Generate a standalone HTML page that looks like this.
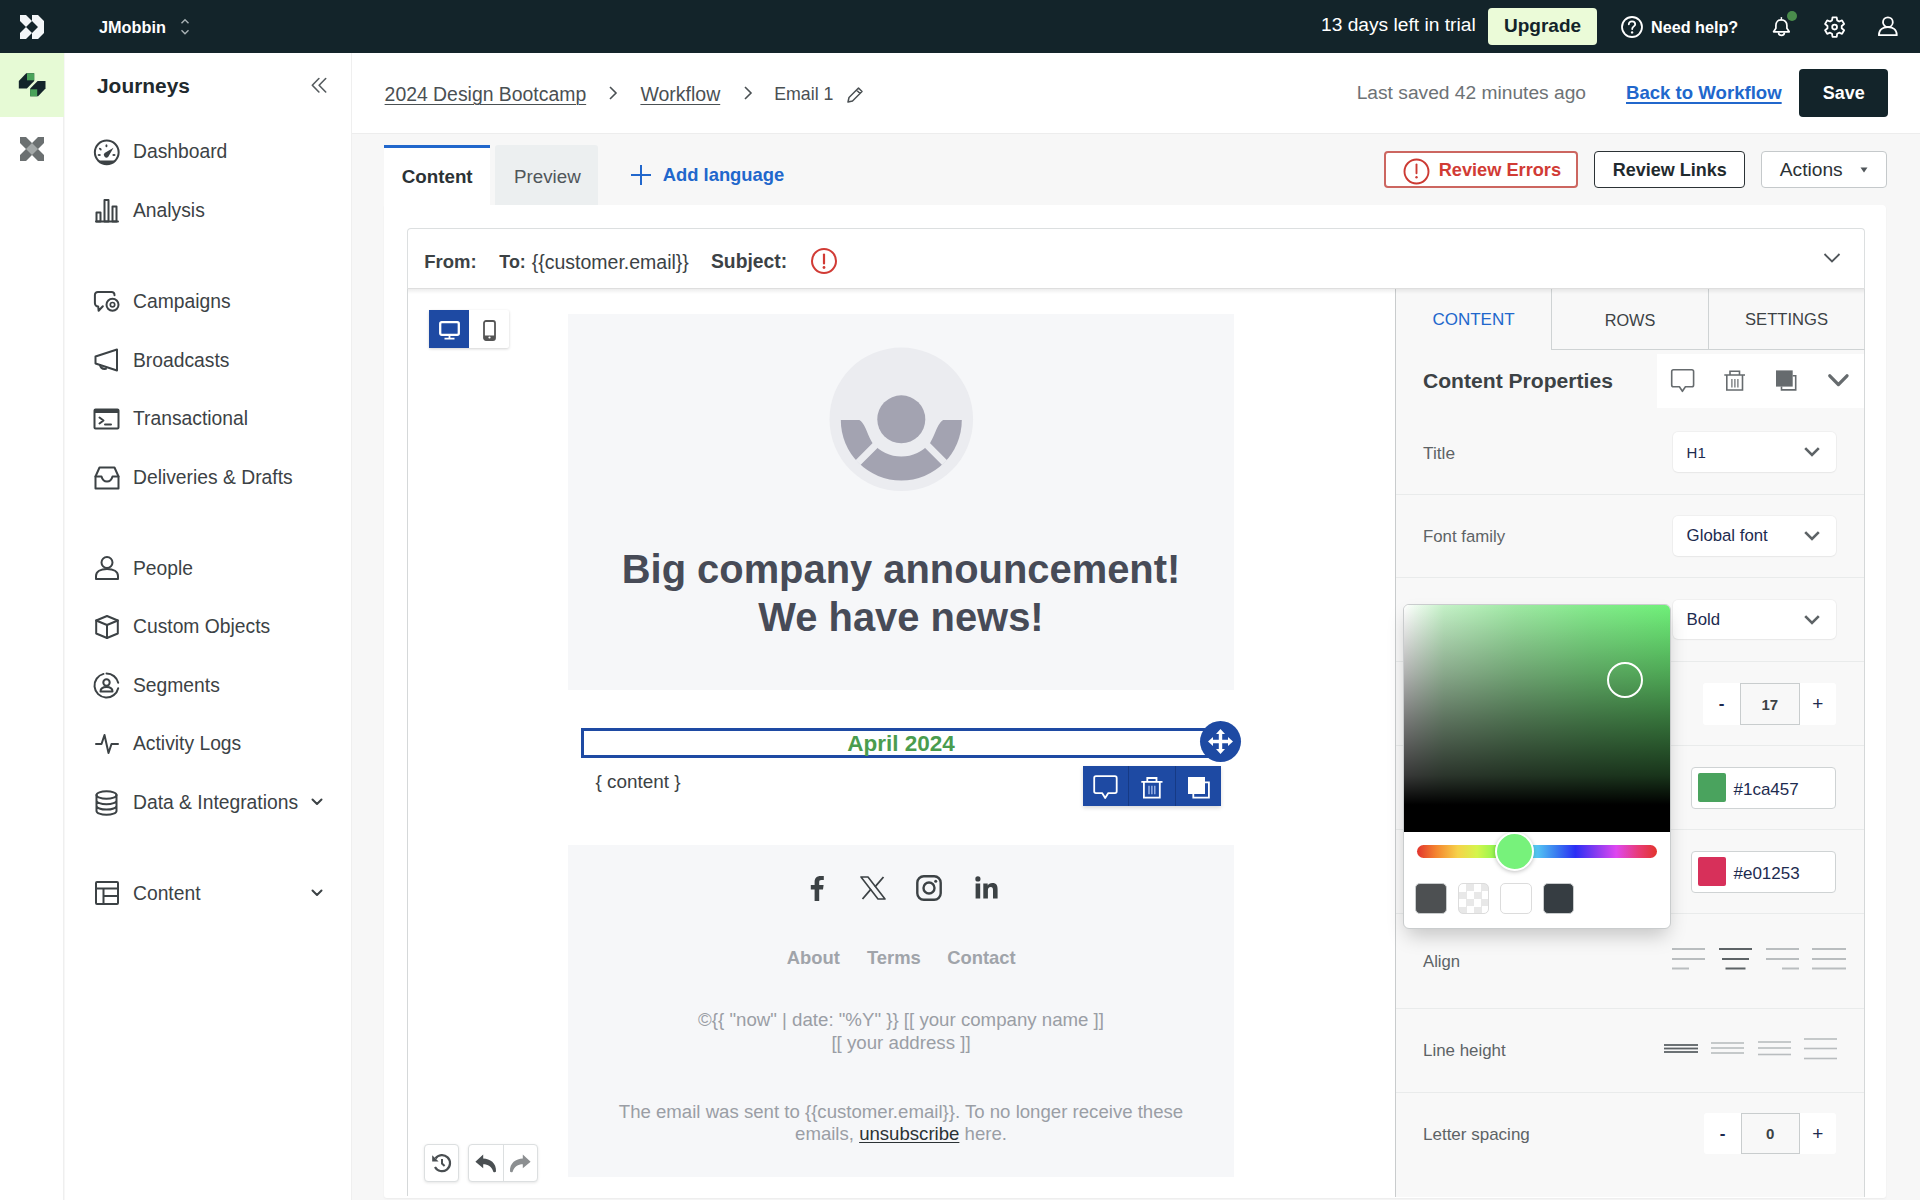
<!DOCTYPE html>
<html><head><meta charset="utf-8">
<style>
*{box-sizing:border-box;margin:0;padding:0}
html,body{width:1920px;height:1200px;overflow:hidden;background:#f7f7f7;font-family:"Liberation Sans",sans-serif;color:#3c4245}
.a{position:absolute}
.t{position:absolute;white-space:nowrap}
svg{position:absolute;overflow:visible}
</style></head><body>
<!-- TOP BAR -->
<div class="a" style="left:0;top:0;width:1920px;height:53px;background:#13242a"></div>
<svg style="left:20px;top:15px" width="24" height="24" viewBox="0 0 24 24"><g fill="#f3f6f8"><path d="M0 0H6L12 6L6 12L0 6Z"/><path d="M0 18L6 12L12 18L6 24H0Z"/><path d="M12 0H18L24 6V18L18 24H12V18L18 12L12 6Z"/></g></svg>
<div class="t" style="left:99px;top:17px;line-height:20px;font-size:16.3px;font-weight:bold;color:#fff">JMobbin</div>
<svg style="left:180px;top:17px" width="10" height="20" viewBox="0 0 10 20"><path d="M1.5 6.2L5 2.7L8.5 6.2M1.5 13.3L5 16.8L8.5 13.3" fill="none" stroke="#a9b2b5" stroke-width="1.4"/></svg>
<div class="t" style="left:1321px;top:14.0px;line-height:22px;font-size:19.2px;color:#fff">13 days left in trial</div>
<div class="a" style="left:1488px;top:8px;width:109px;height:37px;background:#ebfbd8;border-radius:4px"></div>
<div class="t" style="left:1504px;top:15px;line-height:22px;font-size:19px;font-weight:bold;color:#13242a">Upgrade</div>
<svg style="left:1621px;top:16px" width="22" height="22" viewBox="0 0 22 22"><circle cx="11" cy="11" r="10" fill="none" stroke="#fff" stroke-width="1.8"/><path d="M7.8 8.3C7.8 6.4 9.2 5.3 11 5.3C12.8 5.3 14.2 6.5 14.2 8.2C14.2 10.3 11.2 10.6 11.2 13" fill="none" stroke="#fff" stroke-width="1.8" stroke-linecap="round"/><circle cx="11.1" cy="16.4" r="1.2" fill="#fff"/></svg>
<div class="t" style="left:1651px;top:17px;line-height:20px;font-size:16.2px;font-weight:bold;color:#fff">Need help?</div>
<svg style="left:1772px;top:16px" width="20" height="22" viewBox="0 0 20 22"><path d="M1.6 15.8H17.2L14.9 12.2V9.5C14.9 6.1 12.6 3.8 9.4 3.8C6.2 3.8 3.9 6.1 3.9 9.5V12.2Z" fill="none" stroke="#fff" stroke-width="1.7" stroke-linejoin="round"/><path d="M9.4 3.8V1.6" stroke="#fff" stroke-width="1.4" stroke-linecap="round"/><path d="M6.5 16.4A2.95 2.95 0 0 0 12.4 16.4" fill="none" stroke="#fff" stroke-width="1.7"/></svg>
<div class="a" style="left:1787px;top:11.4px;width:10px;height:10px;border-radius:50%;background:#4a8c4c"></div>
<svg style="left:1824px;top:15.7px" width="22" height="23" viewBox="0 0 22 23"><path d="M8.02 4.38 L8.52 1.32 L12.68 1.32 L13.18 4.38 L15.13 5.50 L18.03 4.41 L20.11 8.01 L17.71 9.97 L17.71 12.23 L20.11 14.19 L18.03 17.79 L15.13 16.70 L13.18 17.82 L12.68 20.88 L8.52 20.88 L8.02 17.82 L6.07 16.70 L3.17 17.79 L1.09 14.19 L3.49 12.23 L3.49 9.97 L1.09 8.01 L3.17 4.41 L6.07 5.50Z" fill="none" stroke="#fff" stroke-width="1.8" stroke-linejoin="round"/><circle cx="10.6" cy="11.1" r="2.4" fill="none" stroke="#fff" stroke-width="1.8"/></svg>
<svg style="left:1877px;top:16px" width="22" height="22" viewBox="0 0 22 22"><circle cx="10.9" cy="6.2" r="4.9" fill="none" stroke="#fff" stroke-width="1.8"/><path d="M1.9 19.2H19.8C19.8 13.5 15.5 11 10.9 11C6.3 11 1.9 13.5 1.9 19.2Z" fill="none" stroke="#fff" stroke-width="1.8" stroke-linejoin="round"/></svg>

<!-- LEFT RAIL -->
<div class="a" style="left:0;top:53px;width:64px;height:1147px;background:#fff;border-right:1px solid #efefef"></div>
<div class="a" style="left:0;top:53px;width:64px;height:64px;background:#e6fad5"></div>
<svg style="left:18px;top:73px" width="28" height="24" viewBox="0 0 28 24"><path d="M0.8 8L8.2 0.3H16.2V8L8.9 15.4H0.8Z" fill="#13242a"/><rect x="9" y="0.3" width="7.2" height="7" fill="#4aa35a"/><path d="M12.2 15.4L19.6 8H27.5V15.4L20.1 23.3H12.2Z" fill="#13242a"/><rect x="12.2" y="16.3" width="7" height="7" fill="#4aa35a"/></svg>
<svg style="left:20px;top:137px" width="24" height="24" viewBox="0 0 24 24"><path d="M0 0H6L12 6L18 0H24V6L18 12L24 18V24H18L12 18L6 24H0V18L6 12L0 6Z" fill="#6b7071"/><path d="M12 6L18 12L12 18L6 12Z" fill="#a3a8a8"/></svg>

<!-- SIDEBAR -->
<div class="a" style="left:65px;top:53px;width:287px;height:1147px;background:#fff;border-right:1px solid #efefef"></div>
<div class="t" style="left:97px;top:74px;line-height:24px;font-size:20.9px;font-weight:bold;color:#1f2a2e">Journeys</div>
<svg style="left:309.5px;top:77px" width="18" height="18" viewBox="0 0 18 18"><path d="M8.9 1.55L2.3 8.25L8.9 14.95M15.7 1.55L9.1 8.25L15.7 14.95" fill="none" stroke="#555b5e" stroke-width="1.6" stroke-linecap="round" stroke-linejoin="round"/></svg>
<svg style="left:93px;top:138.5px" width="27" height="27" viewBox="0 0 27 27"><circle cx="13.75" cy="13.35" r="11.9" stroke="#3c4245" stroke-width="2" fill="none" stroke-linejoin="round" stroke-linecap="round"/><path d="M5.18 21.6A11.9 11.9 0 0 0 22.32 21.6Z" fill="#3c4245"/><path d="M20.5 8.7L15.31 17.72A2.6 2.6 0 0 1 11.59 14.08Z" fill="#3c4245"/><ellipse cx="13.45" cy="6.75" rx="1" ry="1.6" fill="#3c4245"/><ellipse cx="7.3" cy="10.05" rx="1.6" ry="1" transform="rotate(45 7.3 10.05)" fill="#3c4245"/><ellipse cx="6.25" cy="16.05" rx="1.6" ry="1" fill="#3c4245"/><ellipse cx="20.95" cy="16.05" rx="1.6" ry="1" fill="#3c4245"/></svg>
<div class="t" style="left:133px;top:140.3px;line-height:24px;font-size:19.3px;color:#3c4245">Dashboard</div>
<svg style="left:95px;top:199px" width="24" height="24" viewBox="0 0 24 24"><path d="M1 22.5H23" stroke="#3c4245" stroke-width="2" fill="none" stroke-linejoin="round" stroke-linecap="round"/><rect x="1.5" y="13.5" width="4" height="9" stroke="#3c4245" stroke-width="2" fill="none" stroke-linejoin="round" stroke-linecap="round"/><rect x="9.5" y="1" width="4" height="21.5" stroke="#3c4245" stroke-width="2" fill="none" stroke-linejoin="round" stroke-linecap="round"/><rect x="17.5" y="7.5" width="4" height="15" stroke="#3c4245" stroke-width="2" fill="none" stroke-linejoin="round" stroke-linecap="round"/></svg>
<div class="t" style="left:133px;top:199.3px;line-height:24px;font-size:19.3px;color:#3c4245">Analysis</div>
<svg style="left:93px;top:290px" width="27" height="23" viewBox="0 0 27 23"><path d="M21.5 5.2V4.9C21.5 3.2 20.3 1.9 18.6 1.9H4.9C3.2 1.9 1.9 3.2 1.9 4.9V13.25C1.9 15 3.3 16.5 5.2 16.5L5.6 20.7L9.85 16.2" stroke="#3c4245" stroke-width="2" fill="none" stroke-linejoin="round" stroke-linecap="round"/><circle cx="19.5" cy="14.7" r="6" stroke="#3c4245" stroke-width="2" fill="none" stroke-linejoin="round" stroke-linecap="round"/><circle cx="19.5" cy="14.7" r="2.2" stroke="#3c4245" stroke-width="1.7" fill="none"/></svg>
<div class="t" style="left:133px;top:289.7px;line-height:24px;font-size:19.3px;color:#3c4245">Campaigns</div>
<svg style="left:94px;top:348px" width="25" height="24" viewBox="0 0 25 24"><path d="M23 1.5V22.5L1.5 15.5V8.5Z" stroke="#3c4245" stroke-width="2" fill="none" stroke-linejoin="round" stroke-linecap="round"/><path d="M6 17C6.5 20 8.8 21.2 12 20.8" stroke="#3c4245" stroke-width="2" fill="none" stroke-linejoin="round" stroke-linecap="round"/></svg>
<div class="t" style="left:133px;top:348.8px;line-height:24px;font-size:19.3px;color:#3c4245">Broadcasts</div>
<svg style="left:93px;top:408px" width="27" height="22" viewBox="0 0 27 22"><rect x="1.5" y="1.5" width="24" height="19" rx="1" stroke="#3c4245" stroke-width="2" fill="none" stroke-linejoin="round" stroke-linecap="round"/><rect x="1.5" y="1.5" width="24" height="3.5" fill="#3c4245"/><path d="M6.5 9.5L10.5 12.5L6.5 15.5M12 16.5H18" stroke="#3c4245" stroke-width="2" fill="none" stroke-linejoin="round" stroke-linecap="round"/></svg>
<div class="t" style="left:133px;top:407.0px;line-height:24px;font-size:19.3px;color:#3c4245">Transactional</div>
<svg style="left:94px;top:466px" width="26" height="24" viewBox="0 0 26 24"><path d="M1.5 10.5L5.5 1.5H20.5L24.5 10.5V22.5H1.5Z" stroke="#3c4245" stroke-width="2" fill="none" stroke-linejoin="round" stroke-linecap="round"/><path d="M1.5 10.5H7.5C8.5 14.5 10 15.5 13 15.5C16 15.5 17.5 14.5 18.5 10.5H24.5" stroke="#3c4245" stroke-width="2" fill="none" stroke-linejoin="round" stroke-linecap="round"/></svg>
<div class="t" style="left:133px;top:465.9px;line-height:24px;font-size:19.3px;color:#3c4245">Deliveries &amp; Drafts</div>
<svg style="left:95px;top:556px" width="24" height="24" viewBox="0 0 24 24"><circle cx="12" cy="6.5" r="5.5" stroke="#3c4245" stroke-width="2" fill="none" stroke-linejoin="round" stroke-linecap="round"/><path d="M1 23H23V20C23 15.5 18.5 13 12 13C5.5 13 1 15.5 1 20Z" stroke="#3c4245" stroke-width="2" fill="none" stroke-linejoin="round" stroke-linecap="round"/></svg>
<div class="t" style="left:133px;top:556.9px;line-height:24px;font-size:19.3px;color:#3c4245">People</div>
<svg style="left:95px;top:615px" width="24" height="24" viewBox="0 0 24 24"><path d="M12 1L22.8 5.5V18.5L12 23L1.2 18.5V5.5Z" stroke="#3c4245" stroke-width="2" fill="none" stroke-linejoin="round" stroke-linecap="round"/><path d="M1.2 5.5L12 10L22.8 5.5M12 10V23" stroke="#3c4245" stroke-width="2" fill="none" stroke-linejoin="round" stroke-linecap="round"/></svg>
<div class="t" style="left:133px;top:615.4px;line-height:24px;font-size:19.3px;color:#3c4245">Custom Objects</div>
<svg style="left:93px;top:672px" width="27" height="27" viewBox="0 0 27 27"><path d="M13.5 1.5A12 12 0 0 1 25.2 10.8M25.2 16.2A12 12 0 1 1 10.5 1.9" stroke="#3c4245" stroke-width="2" fill="none" stroke-linejoin="round" stroke-linecap="round"/><circle cx="13.5" cy="10.5" r="3.2" stroke="#3c4245" stroke-width="2" fill="none" stroke-linejoin="round" stroke-linecap="round"/><path d="M7.5 19.5C7.5 16.3 10 15 13.5 15C17 15 19.5 16.3 19.5 19.5Z" stroke="#3c4245" stroke-width="2" fill="none" stroke-linejoin="round" stroke-linecap="round"/></svg>
<div class="t" style="left:133px;top:674.0px;line-height:24px;font-size:19.3px;color:#3c4245">Segments</div>
<svg style="left:95px;top:733px" width="24" height="22" viewBox="0 0 24 22"><path d="M1 11H6.5L9.5 2L13.5 20L16.5 11H23" stroke="#3c4245" stroke-width="2" fill="none" stroke-linejoin="round" stroke-linecap="round"/></svg>
<div class="t" style="left:133px;top:732.4px;line-height:24px;font-size:19.3px;color:#3c4245">Activity Logs</div>
<svg style="left:95px;top:790px" width="23" height="26" viewBox="0 0 23 26"><ellipse cx="11.5" cy="5" rx="10" ry="3.8" stroke="#3c4245" stroke-width="2" fill="none" stroke-linejoin="round" stroke-linecap="round"/><path d="M1.5 5V21C1.5 23.1 6 24.8 11.5 24.8C17 24.8 21.5 23.1 21.5 21V5M1.5 10.4C1.5 12.5 6 14.2 11.5 14.2C17 14.2 21.5 12.5 21.5 10.4M1.5 15.8C1.5 17.9 6 19.6 11.5 19.6C17 19.6 21.5 17.9 21.5 15.8" stroke="#3c4245" stroke-width="2" fill="none" stroke-linejoin="round" stroke-linecap="round"/></svg>
<div class="t" style="left:133px;top:791.2px;line-height:24px;font-size:19.3px;color:#3c4245">Data &amp; Integrations</div>
<svg style="left:95px;top:881px" width="24" height="24" viewBox="0 0 24 24"><rect x="1" y="1" width="22" height="22" rx="1" stroke="#3c4245" stroke-width="2" fill="none" stroke-linejoin="round" stroke-linecap="round"/><path d="M1 7.5H23M8.5 7.5V23M8.5 15H23" stroke="#3c4245" stroke-width="2" fill="none" stroke-linejoin="round" stroke-linecap="round"/></svg>
<div class="t" style="left:133px;top:881.6px;line-height:24px;font-size:19.3px;color:#3c4245">Content</div>
<svg style="left:311px;top:798px" width="12" height="8" viewBox="0 0 12 8"><path d="M1.5 1.5L6 6L10.5 1.5" stroke="#3c4245" stroke-width="2" fill="none" stroke-linejoin="round" stroke-linecap="round" stroke-width="1.6"/></svg>
<svg style="left:311px;top:889px" width="12" height="8" viewBox="0 0 12 8"><path d="M1.5 1.5L6 6L10.5 1.5" stroke="#3c4245" stroke-width="2" fill="none" stroke-linejoin="round" stroke-linecap="round" stroke-width="1.6"/></svg>

<!-- MAIN HEADER -->
<div class="a" style="left:352px;top:53px;width:1568px;height:81px;background:#fff;border-bottom:1px solid #ededed"></div>
<div class="t" style="left:384.6px;top:82.3px;line-height:24px;font-size:19.4px;color:#4a5053;text-decoration:underline;text-underline-offset:3px;text-decoration-thickness:1px">2024 Design Bootcamp</div>
<svg style="left:607px;top:85px" width="12" height="16" viewBox="0 0 12 16"><path d="M3 2L9 8L3 14" fill="none" stroke="#4a5053" stroke-width="1.6"/></svg>
<div class="t" style="left:640.4px;top:82.4px;line-height:24px;font-size:19.5px;color:#4a5053;text-decoration:underline;text-underline-offset:3px;text-decoration-thickness:1px">Workflow</div>
<svg style="left:742px;top:85px" width="12" height="16" viewBox="0 0 12 16"><path d="M3 2L9 8L3 14" fill="none" stroke="#4a5053" stroke-width="1.6"/></svg>
<div class="t" style="left:774.2px;top:82.3px;line-height:24px;font-size:17.8px;color:#4a5053;">Email 1</div>
<svg style="left:846px;top:86px" width="18" height="18" viewBox="0 0 18 18"><path d="M2 16L3 11.5L12.5 2L16 5.5L6.5 15Z M10.5 4L14 7.5" fill="none" stroke="#4a5053" stroke-width="1.5" stroke-linejoin="round"/></svg>
<div class="t" style="left:1356.7px;top:81.3px;line-height:24px;font-size:19.2px;color:#6d7275;">Last saved 42 minutes ago</div>
<div class="t" style="left:1626px;top:81.3px;line-height:24px;font-size:18.6px;font-weight:bold;color:#2167cc;text-decoration:underline;text-underline-offset:3px;text-decoration-thickness:1.5px">Back to Workflow</div>
<div class="a" style="left:1799px;top:69px;width:89px;height:48px;background:#13242a;border-radius:4px"></div>
<div class="t" style="left:1822.7px;top:81.3px;line-height:24px;font-size:18px;font-weight:bold;color:#fff;">Save</div>
<div class="a" style="left:384px;top:145px;width:106px;height:62px;background:#fff;border-top:3px solid #2167cc"></div>
<div class="t" style="left:401.7px;top:164.8px;line-height:24px;font-size:18.8px;font-weight:bold;color:#2b3235;">Content</div>
<div class="a" style="left:495px;top:145px;width:103px;height:60px;background:#eceff0;border-radius:3px 3px 0 0"></div>
<div class="t" style="left:514px;top:164.8px;line-height:24px;font-size:18.75px;color:#50565a;">Preview</div>
<svg style="left:630px;top:164px" width="22" height="22" viewBox="0 0 22 22"><path d="M11 1V21M1 11H21" stroke="#2167cc" stroke-width="2" fill="none"/></svg>
<div class="t" style="left:662.7px;top:163.3px;line-height:24px;font-size:18.4px;font-weight:bold;color:#2167cc;">Add language</div>
<div class="a" style="left:1384px;top:151px;width:194px;height:37px;border:2px solid #cc6660;border-radius:4px;background:#fff"></div>
<svg style="left:1403px;top:158px" width="27" height="27" viewBox="0 0 27 27"><circle cx="13.5" cy="13.5" r="12" fill="none" stroke="#cc3a33" stroke-width="1.9"/><path d="M13.5 6.5V15.3" stroke="#cc3a33" stroke-width="1.9" stroke-linecap="round"/><circle cx="13.5" cy="19.3" r="1.2" fill="#cc3a33"/></svg>
<div class="t" style="left:1438.7px;top:158.3px;line-height:24px;font-size:18.2px;font-weight:bold;color:#d13b35;">Review Errors</div>
<div class="a" style="left:1594px;top:151px;width:151px;height:37px;border:1.5px solid #2b3235;border-radius:4px;background:#fff"></div>
<div class="t" style="left:1612.8px;top:158.3px;line-height:24px;font-size:18px;font-weight:bold;color:#1f2a2e;">Review Links</div>
<div class="a" style="left:1761px;top:151px;width:126px;height:37px;border:1px solid #c5c9cb;border-radius:4px;background:#fff"></div>
<div class="t" style="left:1779.8px;top:158.3px;line-height:24px;font-size:19.2px;color:#2b3235;">Actions</div>
<svg style="left:1860px;top:167px" width="8" height="6" viewBox="0 0 8 6"><path d="M0.5 0.5H7.5L4 5.5Z" fill="#50565a"/></svg>
<div class="a" style="left:384px;top:205px;width:1502px;height:993px;background:#fff;border-radius:0 4px 3px 3px;box-shadow:0 1px 2px rgba(0,0,0,0.05)"></div>
<div class="a" style="left:407px;top:228px;width:1458px;height:61px;background:#fff;border:1px solid #dcdfe0;border-bottom:1px solid #dedede;border-radius:4px 4px 0 0"></div>
<div class="t" style="left:424.3px;top:249.8px;line-height:24px;font-size:18.5px;font-weight:bold;color:#3c4245;">From:</div>
<div class="t" style="left:499.3px;top:249.8px;line-height:24px;font-size:17.9px;font-weight:bold;color:#3c4245;">To:</div>
<div class="t" style="left:531.7px;top:249.9px;line-height:24px;font-size:19.5px;color:#3c4245;">{{customer.email}}</div>
<div class="t" style="left:711px;top:249.8px;line-height:24px;font-size:19.3px;font-weight:bold;color:#3c4245;">Subject:</div>
<svg style="left:811px;top:248px" width="27" height="27" viewBox="0 0 27 27"><circle cx="13" cy="13" r="12" fill="none" stroke="#d13b35" stroke-width="2"/><path d="M13 6.5V15.5" stroke="#d13b35" stroke-width="2.2" stroke-linecap="round"/><circle cx="13" cy="19.5" r="1.4" fill="#d13b35"/></svg>
<svg style="left:1823px;top:252px" width="18" height="12" viewBox="0 0 18 12"><path d="M1.5 2L9 9.5L16.5 2" fill="none" stroke="#50565a" stroke-width="1.8"/></svg>
<div class="a" style="left:407px;top:289px;width:1px;height:907px;background:#d5d8d9"></div>
<div class="a" style="left:429px;top:310px;width:80px;height:38px;background:#fff;box-shadow:0 1px 3px rgba(0,0,0,0.18);border-radius:2px"></div>
<div class="a" style="left:429px;top:310px;width:40px;height:38px;background:#1e4aa3"></div>
<svg style="left:439px;top:321px" width="21" height="19" viewBox="0 0 21 19"><rect x="1.2" y="1.2" width="18.6" height="12.6" rx="1.5" fill="none" stroke="#fff" stroke-width="2.3"/><path d="M10.5 14V17.5M5.5 17.7H15.5" stroke="#fff" stroke-width="1.8"/></svg>
<svg style="left:483px;top:320px" width="13" height="21" viewBox="0 0 13 21"><rect x="1" y="1" width="11" height="19" rx="2" fill="none" stroke="#555" stroke-width="1.8"/><rect x="1" y="15.5" width="11" height="4.5" fill="#555"/><circle cx="6.5" cy="17.5" r="1.1" fill="#fff"/></svg>
<div class="a" style="left:568px;top:314px;width:666px;height:376px;background:#f6f7f9"></div>
<div class="a" style="left:568px;top:690px;width:666px;height:155px;background:#fff"></div>
<div class="a" style="left:568px;top:845px;width:666px;height:332px;background:#f6f7f9"></div>
<svg style="left:829px;top:347px" width="145" height="145" viewBox="0 0 145 145"><circle cx="72.3" cy="72.3" r="71.8" fill="#ebecf0"/><path d="M11.8 73A60.5 60.5 0 0 0 132.8 73Z" fill="#a3a3b1"/><path d="M26 72C36 72 37 86 43.5 96A37.5 37.5 0 0 0 101.1 96C107.6 86 108.6 72 118.6 72Z" fill="#ebecf0"/><path d="M72.3 72.3L29 115.6M72.3 72.3L115.6 115.6" stroke="#ebecf0" stroke-width="7"/><circle cx="72.3" cy="72.3" r="24" fill="#a3a3b1"/></svg>
<div class="t" style="left:501px;width:800px;text-align:center;top:544.7px;line-height:48px;font-size:39.9px;font-weight:bold;color:#474b57;">Big company announcement!</div>
<div class="t" style="left:501px;width:800px;text-align:center;top:593.3px;line-height:48px;font-size:39.9px;font-weight:bold;color:#474b57;">We have news!</div>
<div class="a" style="left:581px;top:728px;width:640px;height:30px;border:3px solid #1e4aa3"></div>
<div class="t" style="left:501px;width:800px;text-align:center;top:731.9px;line-height:24px;font-size:22.5px;font-weight:bold;color:#4a9c4e;">April 2024</div>
<div class="a" style="left:1200px;top:721px;width:41px;height:41px;border-radius:50%;background:#1e4aa3"></div>
<svg style="left:1207px;top:728px" width="27" height="27" viewBox="0 0 27 27"><path d="M13.5 1L18 6H15.2V11.8H21V9L26 13.5L21 18V15.2H15.2V21H18L13.5 26L9 21H11.8V15.2H6V18L1 13.5L6 9V11.8H11.8V6H9Z" fill="#fff"/></svg>
<div class="t" style="left:595.4px;top:769.6px;line-height:24px;font-size:18.9px;color:#3c4245;">{ content }</div>
<div class="a" style="left:1083px;top:766px;width:138px;height:40px;background:#1e4aa3;box-shadow:0 2px 4px rgba(0,0,0,0.15)"></div>
<div class="a" style="left:1128px;top:766px;width:1px;height:40px;background:#163a85"></div>
<div class="a" style="left:1175px;top:766px;width:1px;height:40px;background:#163a85"></div>
<svg style="left:1093px;top:775px" width="25" height="25" viewBox="0 0 25 25"><path d="M3 1.2H21.9C22.9 1.2 23.7 2 23.7 3V16.3C23.7 17.3 22.9 18.1 21.9 18.1H15.3L12.2 23L9.1 18.1H3C2 18.1 1.2 17.3 1.2 16.3V3C1.2 2 2 1.2 3 1.2Z" fill="none" stroke="#fff" stroke-width="1.8" stroke-linejoin="round"/></svg>
<svg style="left:1141px;top:777px" width="22" height="22" viewBox="0 0 22 22"><path d="M0.3 4.9H21.5M6.3 4.9V1H15.5V4.9M2.9 4.9V20.6H18.8V4.9" fill="none" stroke="#fff" stroke-width="1.8"/><path d="M8 8.8V17.2M10.9 8.8V17.2M13.8 8.8V17.2" stroke="#a9c0f0" stroke-width="1.3"/></svg>
<svg style="left:1187.5px;top:777px" width="23" height="22" viewBox="0 0 23 22"><rect x="0" y="0" width="17" height="17" fill="#fff"/><path d="M17 5.4H20.9V20.6H5.3V17" fill="none" stroke="#fff" stroke-width="1.8"/></svg>
<svg style="left:809px;top:875px" width="16" height="26" viewBox="0 0 16 26"><path d="M10.2 26V14.5H14L14.6 10H10.2V7.3C10.2 6 10.6 5.1 12.4 5.1H14.8V1.1C14.4 1 13 0.9 11.4 0.9C8 0.9 5.6 3 5.6 6.8V10H1.8V14.5H5.6V26Z" fill="#3c4245"/></svg>
<svg style="left:860px;top:876px" width="26" height="24" viewBox="0 0 26 24"><path d="M1 1H8L25 23H18Z" fill="none" stroke="#3c4245" stroke-width="1.6" stroke-linejoin="round"/><path d="M23.5 1L15 10.8M2.5 23L11 13.2" stroke="#3c4245" stroke-width="1.8"/></svg>
<svg style="left:916px;top:875px" width="26" height="26" viewBox="0 0 26 26"><rect x="1.3" y="1.3" width="23.4" height="23.4" rx="6.5" fill="none" stroke="#3c4245" stroke-width="2.4"/><circle cx="13" cy="13" r="5.5" fill="none" stroke="#3c4245" stroke-width="2.4"/><circle cx="19.7" cy="6.3" r="1.5" fill="#3c4245"/></svg>
<svg style="left:975px;top:876px" width="23" height="23" viewBox="0 0 23 23"><circle cx="2.9" cy="2.9" r="2.6" fill="#3c4245"/><rect x="0.6" y="7.5" width="4.6" height="15" fill="#3c4245"/><path d="M8.3 7.5H12.7V9.6C13.4 8.3 15 7.1 17.4 7.1C21.6 7.1 22.6 9.8 22.6 13.5V22.5H18V14.4C18 12.5 17.7 11 15.7 11C13.7 11 12.9 12.5 12.9 14.4V22.5H8.3Z" fill="#3c4245"/></svg>
<div class="t" style="left:786.8px;top:946.1px;line-height:24px;font-size:18.4px;font-weight:bold;color:#a0a4aa;">About</div>
<div class="t" style="left:867px;top:946.1px;line-height:24px;font-size:18.4px;font-weight:bold;color:#a0a4aa;">Terms</div>
<div class="t" style="left:947.2px;top:946.1px;line-height:24px;font-size:18.4px;font-weight:bold;color:#a0a4aa;">Contact</div>
<div class="t" style="left:501px;width:800px;text-align:center;top:1008.3px;line-height:24px;font-size:18.66px;color:#9a9ea5;">©{{ "now" | date: "%Y" }} [[ your company name ]]</div>
<div class="t" style="left:501px;width:800px;text-align:center;top:1031.0px;line-height:24px;font-size:18.7px;color:#9a9ea5;">[[ your address ]]</div>
<div class="t" style="left:501px;width:800px;text-align:center;top:1099.8px;line-height:24px;font-size:18.62px;color:#9a9ea5;">The email was sent to {{customer.email}}. To no longer receive these</div>
<div class="t" style="left:501px;width:800px;text-align:center;top:1122.2px;line-height:24px;font-size:18.6px;color:#9a9ea5;">emails, <span style="color:#2b3235;text-decoration:underline;text-underline-offset:2px">unsubscribe</span> here.</div>
<div class="a" style="left:424px;top:1144px;width:35px;height:38px;background:#fff;border:1px solid #dcdfe0;border-radius:4px;box-shadow:0 1px 3px rgba(0,0,0,0.1)"></div>
<div class="a" style="left:468px;top:1144px;width:70px;height:38px;background:#fff;border:1px solid #dcdfe0;border-radius:4px;box-shadow:0 1px 3px rgba(0,0,0,0.1)"></div>
<div class="a" style="left:503px;top:1145px;width:1px;height:36px;background:#dcdfe0"></div>
<svg style="left:431px;top:1152px" width="22" height="22" viewBox="0 0 22 22"><path d="M4.5 6.5A8 8 0 1 1 4 15" fill="none" stroke="#4a4f52" stroke-width="2.2"/><path d="M1.2 3.2V9.6H7.6Z" fill="#4a4f52"/><path d="M11 7V11.5L13.6 14" fill="none" stroke="#4a4f52" stroke-width="2"/></svg>
<svg style="left:475px;top:1153px" width="22" height="21" viewBox="0 0 22 21"><path d="M0.4 8.7L8.2 1.5V5.6C15 5.8 21.5 10 21 18.5C20.5 19.5 19 19.6 18.3 18.7C16.5 13.5 13 11.3 8.2 11.3V15.3Z" fill="#4a4f52"/></svg>
<svg style="left:509px;top:1153px" width="22" height="21" viewBox="0 0 22 21"><path d="M21.6 8.7L13.8 1.5V5.6C7 5.8 0.5 10 1 18.5C1.5 19.5 3 19.6 3.7 18.7C5.5 13.5 9 11.3 13.8 11.3V15.3Z" fill="#8c8f91"/></svg>
<div class="a" style="left:1395px;top:289px;width:470px;height:908px;background:#f8f8f8;border-left:1px solid #c9cccd;border-right:1px solid #d5d8d9"></div>
<div class="a" style="left:1551px;top:289px;width:314px;height:61px;border-bottom:1px solid #cfd3d4"></div>
<div class="a" style="left:1551px;top:289px;width:1px;height:61px;background:#cfd3d4"></div>
<div class="a" style="left:1708px;top:289px;width:1px;height:61px;background:#cfd3d4"></div>
<div class="t" style="left:1373.5px;width:200px;text-align:center;top:307.8px;line-height:24px;font-size:17px;color:#2167cc;">CONTENT</div>
<div class="t" style="left:1530px;width:200px;text-align:center;top:307.8px;line-height:24px;font-size:16.3px;color:#3c4245;">ROWS</div>
<div class="t" style="left:1686.5px;width:200px;text-align:center;top:307.8px;line-height:24px;font-size:16.6px;color:#3c4245;">SETTINGS</div>
<div class="a" style="left:408px;top:289px;width:1456px;height:5px;background:linear-gradient(rgba(0,0,0,0.07),rgba(0,0,0,0))"></div>
<div class="t" style="left:1423px;top:369.4px;line-height:24px;font-size:21.1px;font-weight:bold;color:#3c4245;">Content Properties</div>
<div class="a" style="left:1657px;top:354px;width:207px;height:54px;background:#fff"></div>
<svg style="left:1670px;top:368px" width="25" height="25" viewBox="0 0 25 25"><path d="M3.5 1.7H21.8C22.8 1.7 23.6 2.5 23.6 3.5V17C23.6 18 22.8 18.8 21.8 18.8H15.4L12.4 23.3L9.4 18.8H3.5C2.5 18.8 1.7 18 1.7 17V3.5C1.7 2.5 2.5 1.7 3.5 1.7Z" fill="none" stroke="#666b6e" stroke-width="1.6" stroke-linejoin="round"/></svg>
<svg style="left:1724px;top:370px" width="22" height="22" viewBox="0 0 22 22"><path d="M0.3 5H21M6 5V1.2H15.5V5M2.8 5V20H18.5V5" fill="none" stroke="#666b6e" stroke-width="1.6"/><path d="M7.9 9V17.5M10.9 9V17.5M13.9 9V17.5" fill="none" stroke="#666b6e" stroke-width="1.2"/></svg>
<svg style="left:1776px;top:370px" width="21" height="22" viewBox="0 0 21 22"><rect x="0" y="0.4" width="16.7" height="16.2" fill="#666b6e"/><path d="M16.7 5.8H19.7V19.9H5.5V16.6" fill="none" stroke="#666b6e" stroke-width="1.6"/></svg>
<svg style="left:1828px;top:374px" width="21" height="13" viewBox="0 0 21 13"><path d="M1.8 1.8L10.4 10.6L19 1.8" fill="none" stroke="#666b6e" stroke-width="3.3" stroke-linecap="round" stroke-linejoin="round"/></svg>
<div class="a" style="left:1396px;top:494px;width:468px;height:1px;background:#e9ebeb"></div>
<div class="a" style="left:1396px;top:577px;width:468px;height:1px;background:#e9ebeb"></div>
<div class="a" style="left:1396px;top:661px;width:468px;height:1px;background:#e9ebeb"></div>
<div class="a" style="left:1396px;top:745px;width:468px;height:1px;background:#e9ebeb"></div>
<div class="a" style="left:1396px;top:829px;width:468px;height:1px;background:#e9ebeb"></div>
<div class="a" style="left:1396px;top:913px;width:468px;height:1px;background:#e9ebeb"></div>
<div class="a" style="left:1396px;top:1008px;width:468px;height:1px;background:#e9ebeb"></div>
<div class="a" style="left:1396px;top:1092px;width:468px;height:1px;background:#e9ebeb"></div>
<div class="t" style="left:1423px;top:440.8px;line-height:24px;font-size:17.3px;color:#5d6366;">Title</div>
<div class="t" style="left:1423px;top:524.8px;line-height:24px;font-size:16.8px;color:#5d6366;">Font family</div>
<div class="t" style="left:1423px;top:950.3px;line-height:24px;font-size:16.7px;color:#5d6366;">Align</div>
<div class="t" style="left:1423px;top:1039.0px;line-height:24px;font-size:16.9px;color:#5d6366;">Line height</div>
<div class="t" style="left:1423px;top:1122.7px;line-height:24px;font-size:17px;color:#5d6366;">Letter spacing</div>
<div class="a" style="left:1673px;top:432px;width:163px;height:40px;background:#fff;border-radius:5px;box-shadow:0 0 0 1px rgba(0,0,0,0.03),0 1px 2px rgba(0,0,0,0.04)"></div>
<div class="t" style="left:1686.6px;top:441.3px;line-height:24px;font-size:15px;color:#1d2b4f;">H1</div>
<svg style="left:1804px;top:447.0px" width="16" height="10" viewBox="0 0 16 10"><path d="M1.2 1.2L8 8L14.8 1.2" fill="none" stroke="#5d6366" stroke-width="2.6"/></svg>
<div class="a" style="left:1673px;top:516px;width:163px;height:40px;background:#fff;border-radius:5px;box-shadow:0 0 0 1px rgba(0,0,0,0.03),0 1px 2px rgba(0,0,0,0.04)"></div>
<div class="t" style="left:1686.6px;top:524.3px;line-height:24px;font-size:16.8px;color:#1d2b4f;">Global font</div>
<svg style="left:1804px;top:531.0px" width="16" height="10" viewBox="0 0 16 10"><path d="M1.2 1.2L8 8L14.8 1.2" fill="none" stroke="#5d6366" stroke-width="2.6"/></svg>
<div class="a" style="left:1673px;top:600px;width:163px;height:39px;background:#fff;border-radius:5px;box-shadow:0 0 0 1px rgba(0,0,0,0.03),0 1px 2px rgba(0,0,0,0.04)"></div>
<div class="t" style="left:1686.6px;top:607.8px;line-height:24px;font-size:16.8px;color:#1d2b4f;">Bold</div>
<svg style="left:1804px;top:614.5px" width="16" height="10" viewBox="0 0 16 10"><path d="M1.2 1.2L8 8L14.8 1.2" fill="none" stroke="#5d6366" stroke-width="2.6"/></svg>
<div class="a" style="left:1703px;top:683px;width:133px;height:42px;background:#fff;border-radius:3px"></div>
<div class="a" style="left:1740px;top:683px;width:59.5px;height:42px;background:#f8f8f8;border:1px solid #c9cdce"></div>
<div class="t" style="left:1669.75px;width:200px;text-align:center;top:692.8px;line-height:24px;font-weight:bold;font-size:15px;color:#3c4245;">17</div>
<div class="t" style="left:1621.5px;width:200px;text-align:center;top:692.3px;line-height:24px;font-size:17px;font-weight:bold;color:#1d2b4f;">-</div>
<div class="t" style="left:1717.75px;width:200px;text-align:center;top:692.3px;line-height:24px;font-size:19px;color:#1d2b4f;">+</div>
<div class="a" style="left:1691px;top:767px;width:145px;height:42px;background:#fff;border:1px solid #cfd3d4;border-radius:4px"></div>
<div class="a" style="left:1697.5px;top:773px;width:28.5px;height:29px;background:#4aa35e;border-radius:2px"></div>
<div class="t" style="left:1733.5px;top:777.6px;line-height:24px;font-size:17px;color:#1d2b4f;">#1ca457</div>
<div class="a" style="left:1691px;top:851px;width:145px;height:42px;background:#fff;border:1px solid #cfd3d4;border-radius:4px"></div>
<div class="a" style="left:1697.5px;top:857px;width:28.5px;height:29px;background:#d7305a;border-radius:2px"></div>
<div class="t" style="left:1733.5px;top:861.6px;line-height:24px;font-size:17px;color:#1d2b4f;">#e01253</div>
<svg style="left:1672px;top:947px" width="33" height="23.5" viewBox="0 0 33 23.5"><rect x="0" y="1.0" width="33" height="2" fill="#b9bdbf"/><rect x="0" y="11.0" width="33" height="2" fill="#b9bdbf"/><rect x="0" y="20.5" width="17" height="2" fill="#b9bdbf"/></svg>
<svg style="left:1719px;top:947px" width="33" height="23.5" viewBox="0 0 33 23.5"><rect x="0.0" y="1.0" width="33" height="2" fill="#5d6366"/><rect x="3.0" y="11.0" width="27" height="2" fill="#5d6366"/><rect x="6.5" y="20.5" width="20" height="2" fill="#5d6366"/></svg>
<svg style="left:1766px;top:947px" width="33" height="23.5" viewBox="0 0 33 23.5"><rect x="0" y="1.0" width="33" height="2" fill="#b9bdbf"/><rect x="0" y="11.0" width="33" height="2" fill="#b9bdbf"/><rect x="16" y="20.5" width="17" height="2" fill="#b9bdbf"/></svg>
<svg style="left:1812px;top:947px" width="34" height="23.5" viewBox="0 0 34 23.5"><rect x="0" y="1.0" width="34" height="2" fill="#b9bdbf"/><rect x="0" y="11.0" width="34" height="2" fill="#b9bdbf"/><rect x="0" y="20.5" width="34" height="2" fill="#b9bdbf"/></svg>
<svg style="left:1664px;top:1042.5px" width="34" height="11.0" viewBox="0 0 34 11.0"><rect x="0" y="1.1" width="34" height="1.8" fill="#5d6366"/><rect x="0" y="4.6" width="34" height="1.8" fill="#5d6366"/><rect x="0" y="8.1" width="34" height="1.8" fill="#5d6366"/></svg>
<svg style="left:1711px;top:1041px" width="33" height="14" viewBox="0 0 33 14"><rect x="0" y="1.2" width="33" height="1.6" fill="#b9bdbf"/><rect x="0" y="6.2" width="33" height="1.6" fill="#b9bdbf"/><rect x="0" y="11.2" width="33" height="1.6" fill="#b9bdbf"/></svg>
<svg style="left:1758px;top:1040px" width="33" height="16.5" viewBox="0 0 33 16.5"><rect x="0" y="1.2" width="33" height="1.6" fill="#b9bdbf"/><rect x="0" y="7.2" width="33" height="1.6" fill="#b9bdbf"/><rect x="0" y="13.7" width="33" height="1.6" fill="#b9bdbf"/></svg>
<svg style="left:1804px;top:1036.5px" width="33" height="23.5" viewBox="0 0 33 23.5"><rect x="0" y="1.2" width="33" height="1.6" fill="#b9bdbf"/><rect x="0" y="10.7" width="33" height="1.6" fill="#b9bdbf"/><rect x="0" y="20.7" width="33" height="1.6" fill="#b9bdbf"/></svg>
<div class="a" style="left:1704px;top:1113px;width:132px;height:41px;background:#fff;border-radius:3px"></div>
<div class="a" style="left:1741px;top:1113px;width:58.5px;height:41px;background:#f8f8f8;border:1px solid #c9cdce"></div>
<div class="t" style="left:1670.25px;width:200px;text-align:center;top:1122.3px;line-height:24px;font-weight:bold;font-size:15px;color:#3c4245;">0</div>
<div class="t" style="left:1622.5px;width:200px;text-align:center;top:1121.8px;line-height:24px;font-size:17px;font-weight:bold;color:#1d2b4f;">-</div>
<div class="t" style="left:1717.75px;width:200px;text-align:center;top:1121.8px;line-height:24px;font-size:19px;color:#1d2b4f;">+</div>
<div class="a" style="left:1403px;top:604px;width:268px;height:325px;background:#fff;border:1px solid #c9cccd;border-radius:6px;box-shadow:0 10px 20px -4px rgba(0,0,0,0.22);overflow:hidden"><div class="a" style="left:0;top:0;width:266px;height:227px;background:linear-gradient(to right,#fff 0%,#c4f1c7 15%,#9fe9a4 42%,#83eb8b 70%,#6ff079 100%)"></div><div class="a" style="left:0;top:0;width:266px;height:227px;background:linear-gradient(to bottom,rgba(0,0,0,0) 0%,rgba(0,0,0,0.3) 30%,rgba(0,0,0,0.52) 50%,rgba(0,0,0,0.78) 75%,#000 88%)"></div></div>
<div class="a" style="left:1607px;top:662px;width:36px;height:36px;border-radius:50%;border:2.5px solid #fff"></div>
<div class="a" style="left:1417px;top:845px;width:240px;height:13px;border-radius:7px;background:linear-gradient(to right,#e2342d 0%,#f4852f 8%,#f6d24a 17%,#d5f54c 25%,#8ef550 33%,#71f27c 40%,#5ad7f4 48%,#3a7cf0 58%,#2b2ef5 66%,#8b3bf0 75%,#de47f0 83%,#e83c7a 92%,#e2342d 100%)"></div>
<div class="a" style="left:1495px;top:832px;width:39px;height:39px;border-radius:50%;background:#77f27b;border:2.5px solid #fff;box-shadow:0 1px 4px rgba(0,0,0,0.25)"></div>
<div class="a" style="left:1415px;top:882.5px;width:31.5px;height:31.5px;border-radius:5px;background:#4d5052;border:1px solid #c9cccd"></div>
<div class="a" style="left:1457.5px;top:882.5px;width:31.5px;height:31.5px;border-radius:5px;border:1px solid #dcdcdc;background:conic-gradient(#e8e8e8 25%,#fff 0 50%,#e8e8e8 0 75%,#fff 0) 0 0/15px 15px"></div>
<div class="a" style="left:1500px;top:882.5px;width:31.5px;height:31.5px;border-radius:5px;background:#fff;border:1px solid #dcdcdc"></div>
<div class="a" style="left:1542.5px;top:882.5px;width:31.5px;height:31.5px;border-radius:5px;background:#363d42;border:1px solid #c9cccd"></div>

</body></html>
